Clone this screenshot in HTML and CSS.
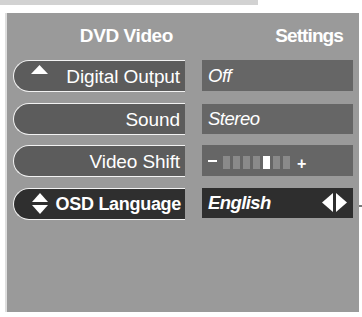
FILE: index.html
```html
<!DOCTYPE html>
<html>
<head>
<meta charset="utf-8">
<link rel="stylesheet" href="styles.css">
</head>
<body>
<div class="topbar"></div>
<div class="panel">
  <div class="head">
    <div class="head-l">DVD Video</div>
    <div class="head-r">Settings</div>
  </div>
  <div class="rows">
    <div class="row">
      <div class="pill">
        <svg class="ico-up" width="17" height="9" viewBox="0 0 17 9"><polygon points="0,9 8.5,0 17,9" fill="#fff"/></svg>
        <span class="lbl">Digital Output</span>
      </div>
      <div class="val"><span class="vtxt">Off</span></div>
    </div>
    <div class="row">
      <div class="pill"><span class="lbl">Sound</span></div>
      <div class="val"><span class="vtxt">Stereo</span></div>
    </div>
    <div class="row">
      <div class="pill"><span class="lbl">Video Shift</span></div>
      <div class="val shift">
        <span class="minus"></span>
        <div class="segs">
          <span class="seg"></span><span class="seg"></span><span class="seg"></span><span class="seg"></span><span class="seg on"></span><span class="seg"></span><span class="seg"></span>
        </div>
        <span class="plus">+</span>
      </div>
    </div>
    <div class="row sel">
      <div class="pill">
        <svg class="ico-ud" width="16" height="23" viewBox="0 0 16 23"><polygon points="0,10 8,1 16,10" fill="#fff"/><polygon points="0,13 16,13 8,22" fill="#fff"/></svg>
        <span class="lbl">OSD Language</span>
      </div>
      <div class="val">
        <span class="vtxt">English</span>
        <svg class="ico-lr" width="25" height="19" viewBox="0 0 25 19"><polygon points="11,0 0,9.5 11,19" fill="#fff"/><polygon points="14,0 25,9.5 14,19" fill="#fff"/></svg>
      </div>
      <span class="tick"></span>
    </div>
  </div>
</div>
</body>
</html>
```
FILE: styles.css
```css
html, body {
  margin: 0;
  padding: 0;
  background: #ffffff;
}
body {
  width: 362px;
  height: 317px;
  overflow: hidden;
  font-family: "Liberation Sans", Arial, sans-serif;
  color: #ffffff;
}
.topbar {
  width: 258px;
  height: 5px;
  background: #d2d2d2;
}
.panel {
  margin: 8px 0 0 5px;
  height: 299px;
  width: 340px;
  background: #9a9a9a;
  border-left: 2px solid #dedede;
  padding: 0 6px;
  position: relative;
}
.head {
  display: grid;
  grid-template-columns: 172px 151px;
  column-gap: 17px;
  height: 47px;
  align-items: start;
  font-weight: bold;
  font-size: 19px;
}
.head-l {
  text-align: right;
  padding-right: 12px;
  padding-top: 12px;
  letter-spacing: -0.4px;
}
.head-r {
  text-align: right;
  padding-right: 10px;
  padding-top: 12px;
  letter-spacing: -0.9px;
}
.rows {
  display: flex;
  flex-direction: column;
  gap: 10.5px;
}
.row {
  display: grid;
  grid-template-columns: 172px 151px;
  column-gap: 17px;
  align-items: start;
  position: relative;
}
.pill {
  height: 32px;
  box-sizing: border-box;
  border: 1.5px solid #f2f2f2;
  border-right: none;
  border-radius: 16px 0 0 16px;
  background: #5c5c5c;
  display: flex;
  align-items: center;
  justify-content: flex-end;
  padding-right: 5px;
  position: relative;
}
.lbl {
  font-size: 19px;
  letter-spacing: -0.1px;
  line-height: 1;
  padding-top: 1px;
}
.ico-up {
  position: absolute;
  left: 17px;
  top: 3.5px;
}
.ico-ud {
  position: absolute;
  left: 18px;
  top: 3px;
}
.val {
  height: 31px;
  background: #666666;
  display: flex;
  align-items: center;
  padding-left: 6px;
  box-sizing: border-box;
}
.vtxt {
  font-style: italic;
  font-size: 18.5px;
  letter-spacing: -0.5px;
  line-height: 1;
  padding-top: 1px;
}
.row:nth-child(2) .val { margin-top: 1px; height: 30px; }
.minus {
  width: 9px;
  height: 2.5px;
  background: #fff;
  margin-top: 1px;
}
.segs {
  display: flex;
  gap: 3px;
  margin-left: 6px;
  margin-top: 3px;
}
.seg {
  width: 7px;
  height: 13px;
  background: #8a8a8a;
}
.seg.on {
  background: #ffffff;
}
.plus {
  font-weight: bold;
  font-size: 16px;
  margin-left: 7px;
  margin-top: 6px;
  line-height: 1;
}
.sel .pill {
  background: #2f2f2f;
  padding-right: 4px;
}
.sel .lbl {
  font-weight: bold;
  font-size: 18px;
  letter-spacing: -0.3px;
}
.sel .val {
  background: #2e2e2e;
  justify-content: space-between;
  padding-right: 6px;
  height: 30px;
}
.sel .vtxt {
  font-weight: bold;
  letter-spacing: -0.6px;
}
.tick {
  position: absolute;
  right: -9px;
  top: 17px;
  width: 3px;
  height: 2px;
  background: #7a7a7a;
}
```
